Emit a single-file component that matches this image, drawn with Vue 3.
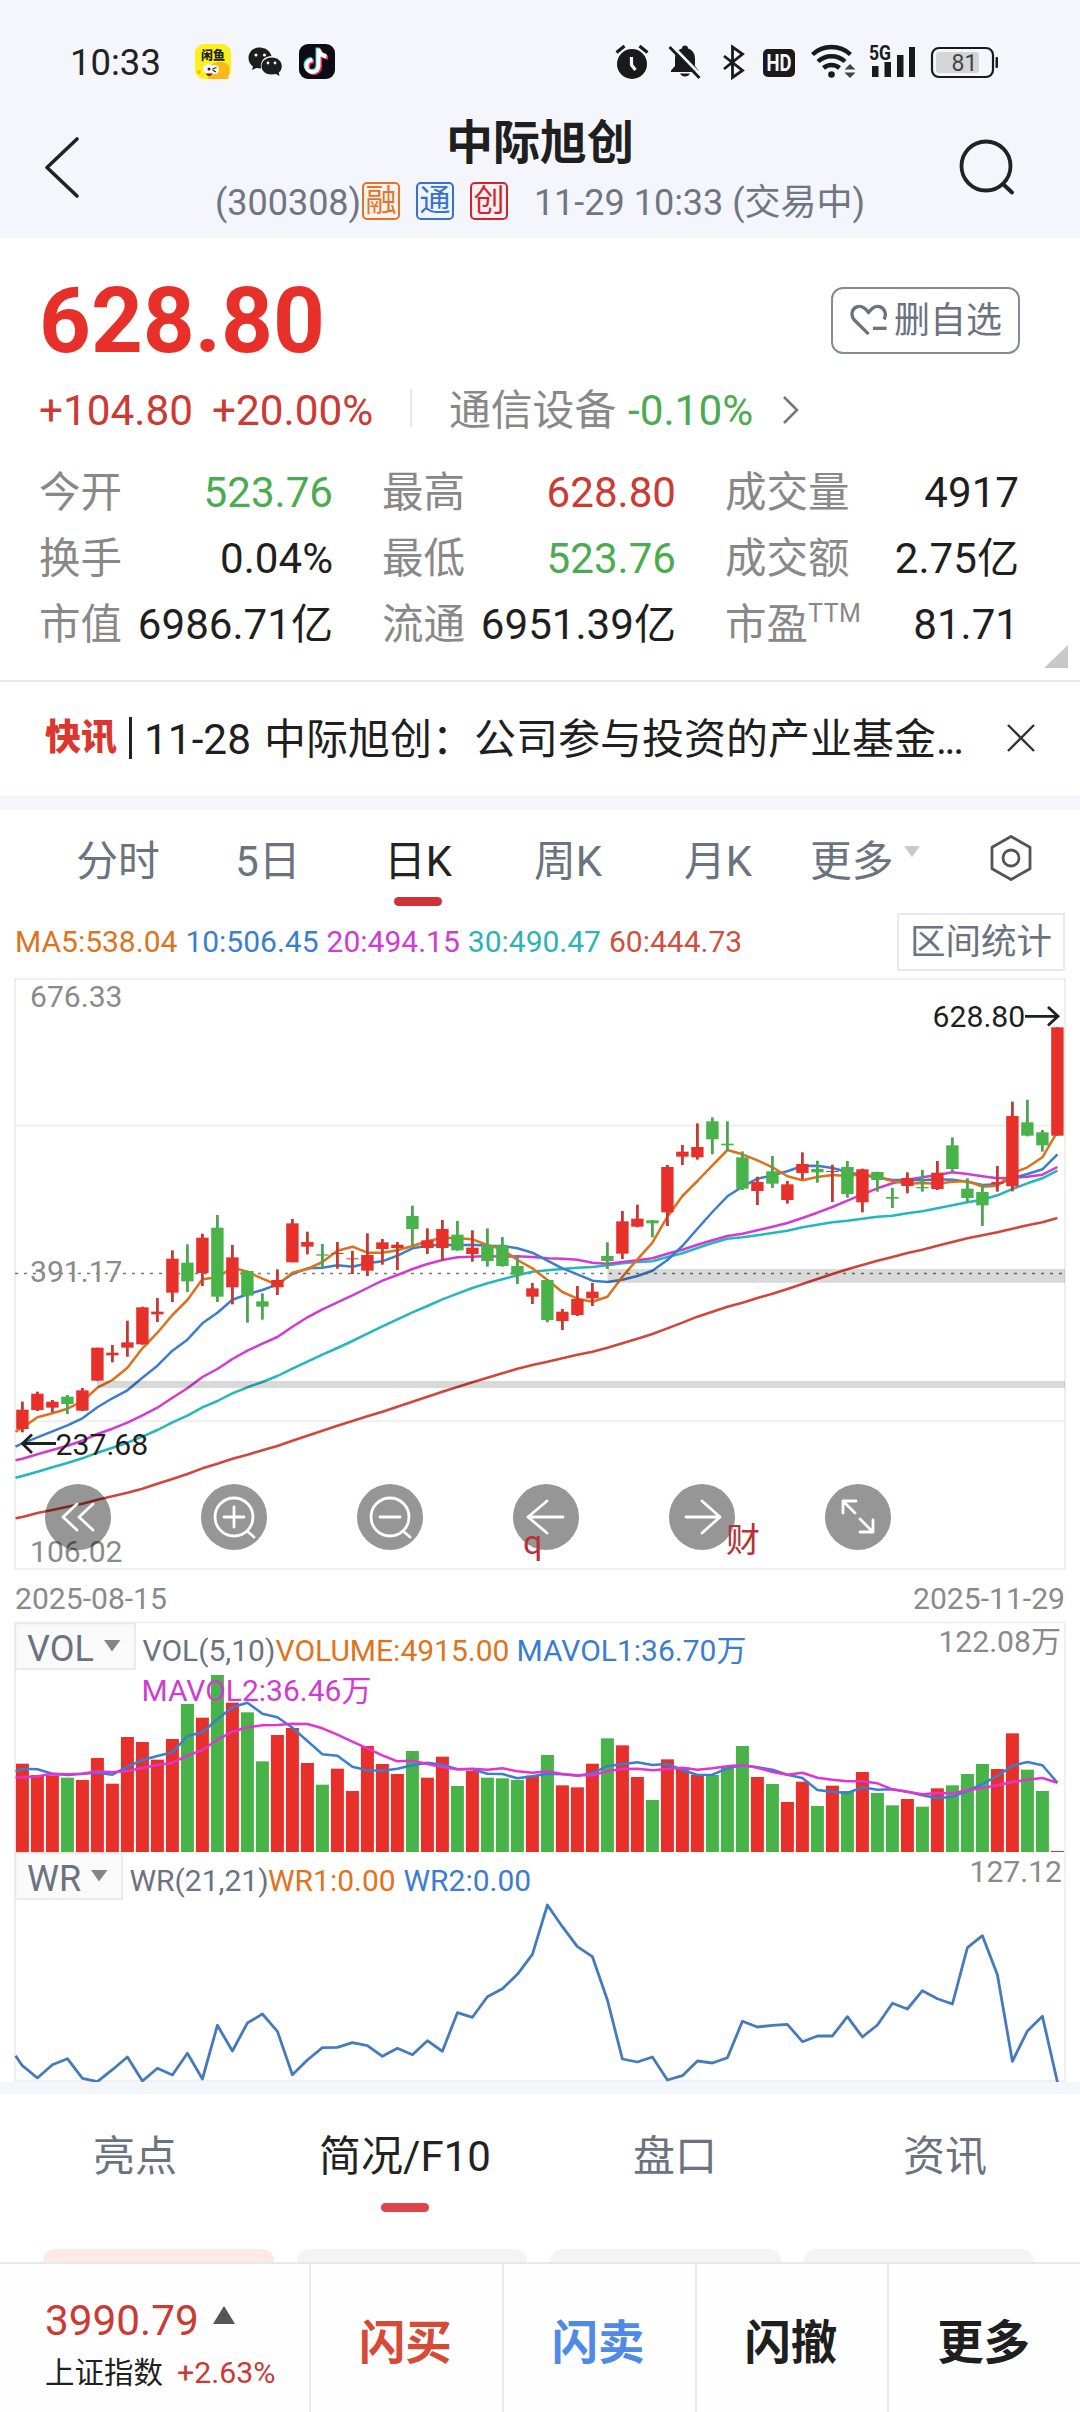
<script setup>
const ORIGIN = 22.4
const STEP = 15
const cx = (i) => ORIGIN + STEP * i

// Rows are [kind, high, bodyTop, bodyBottom, low] in thirds of a pixel
const early = [
  ['r', 605, 629, 687, 697], ['r', 575, 581, 630, 633], ['r', 600, 605, 623, 637], ['g', 585, 590, 612, 642],
  ['r', 564, 571, 632, 633], ['r', 443, 443, 542, 542], ['r', 435, 458, 466, 487], ['r', 362, 427, 443, 470],
  ['r', 320, 322, 433, 434], ['r', 294, 335, 343, 366], ['r', 151, 176, 278, 306], ['g', 133, 188, 244, 276],
  ['r', 101, 113, 219, 258], ['g', 45, 83, 290, 306], ['r', 135, 172, 262, 313], ['g', 212, 213, 287, 368],
  ['g', 280, 304, 320, 359], ['r', 208, 240, 262, 285], ['r', 57, 70, 187, 187], ['r', 95, 126, 140, 163],
  ['g', 132, 163, 167, 205], ['r', 126, 159, 162, 206], ['r', 153, 175, 178, 222], ['r', 100, 165, 212, 228],
  ['r', 117, 127, 147, 194], ['r', 126, 134, 144, 210], ['g', 17, 48, 87, 136], ['r', 85, 121, 144, 162],
  ['r', 60, 87, 144, 181], ['g', 63, 104, 151, 152], ['r', 91, 143, 162, 185], ['g', 85, 136, 183, 200],
  ['g', 111, 136, 198, 200], ['g', 170, 198, 224, 252], ['r', 249, 265, 290, 312], ['g', 238, 240, 360, 367],
  ['r', 327, 335, 363, 390], ['r', 258, 297, 345, 348], ['r', 249, 275, 295, 318], ['g', 127, 168, 183, 207],
  ['r', 33, 64, 161, 177], ['r', 14, 56, 80, 82], ['g', 60, 61, 70, 112],
].map(([k, ...v]) => [k, ...v.map((n) => n + 720)])
const late = [
  ['r', 615, 621, 757, 798], ['r', 555, 575, 590, 615], ['r', 490, 561, 592, 599], ['g', 472, 484, 538, 583],
  ['g', 484, 551, 556, 573], ['g', 574, 592, 686, 690], ['r', 650, 666, 693, 735], ['g', 588, 634, 671, 684],
  ['r', 663, 673, 720, 731], ['r', 577, 612, 639, 658], ['g', 602, 627, 637, 668], ['r', 614, 633, 636, 726],
  ['g', 603, 621, 702, 713], ['r', 626, 628, 727, 757], ['g', 635, 636, 660, 695], ['g', 684, 711, 716, 744],
  ['r', 637, 654, 678, 700], ['g', 630, 681, 685, 695], ['r', 603, 638, 687, 690], ['g', 532, 556, 627, 635],
  ['g', 655, 686, 714, 727], ['g', 672, 696, 736, 798], ['r', 618, 666, 672, 695], ['r', 425, 468, 679, 694],
  ['g', 419, 487, 527, 529], ['g', 510, 517, 556, 575], ['r', 202, 202, 527, 527],
]
const py = (v) => 960 + v / 3
const candles = [...early, ...late].map(([kind, hi, top, bottom, lo], i) => ({
  kind, x: cx(i), hi: py(hi), top: py(top), lo: py(lo), h: (bottom - top) / 3,
}))

// First value of every series sits on the left border, the rest on candle centres
const toLine = (vals, y) => vals.map((v, i) => `${i === 0 ? 15.5 : cx(i - 1)},${y(v).toFixed(1)}`).join(' ')
const merge = (a, b) => [...a.map((n) => n + 720), ...b]

const maLines = [
  { color: '#d2453a', vals: merge(
    [955, 951, 939, 930, 920, 911, 899, 889, 878, 866, 851, 837, 822, 805, 791, 776, 764, 751, 738, 722, 707, 692, 677, 663, 649, 635, 620, 605, 590, 575, 561, 547, 533, 520, 506, 495, 485, 475, 464, 455, 443, 430, 416, 402],
    [1105, 1088, 1070, 1055, 1040, 1028, 1014, 1001, 987, 972, 957, 942, 928, 915, 902, 891, 879, 869, 857, 846, 835, 826, 817, 806, 796, 787, 774]) },
  { color: '#22b8bd', vals: merge(
    [833, 828, 815, 802, 789, 775, 758, 743, 728, 710, 690, 667, 647, 622, 603, 580, 562, 546, 528, 506, 485, 464, 444, 423, 401, 379, 358, 337, 318, 298, 281, 264, 250, 238, 226, 215, 211, 207, 203, 201, 196, 190, 186, 184],
    [891, 880, 864, 849, 836, 832, 826, 819, 812, 802, 794, 787, 782, 776, 770, 767, 760, 754, 745, 736, 727, 719, 706, 687, 670, 655, 632]) },
  { color: '#d23bd2', vals: merge(
    [781, 776, 763, 750, 737, 722, 702, 686, 668, 646, 623, 593, 565, 531, 507, 477, 452, 431, 411, 380, 352, 328, 307, 286, 264, 242, 225, 207, 192, 180, 172, 170, 168, 170, 169, 171, 175, 176, 179, 188, 191, 186, 181, 175],
    [881, 869, 854, 841, 828, 821, 811, 800, 789, 774, 758, 741, 722, 703, 685, 670, 659, 652, 645, 637, 642, 649, 655, 653, 650, 644, 621]) },
  { color: '#3b7dd0', vals: merge(
    [740, 730, 712, 694, 676, 655, 622, 595, 571, 533, 497, 452, 419, 370, 338, 299, 283, 270, 253, 222, 205, 203, 196, 200, 190, 184, 167, 145, 137, 134, 136, 134, 137, 138, 145, 158, 182, 205, 223, 242, 246, 239, 228, 212],
    [900, 858, 806, 756, 709, 680, 656, 646, 634, 618, 617, 624, 636, 646, 652, 660, 660, 661, 658, 659, 665, 675, 673, 655, 642, 628, 583]) },
  { color: '#df7119', vals: merge(
    [695, 683, 652, 640, 626, 604, 563, 540, 503, 445, 398, 345, 300, 238, 232, 203, 215, 236, 255, 218, 207, 186, 152, 140, 158, 158, 151, 138, 124, 113, 115, 118, 135, 148, 180, 205, 240, 276, 296, 305, 290, 230, 178, 128],
    [770, 708, 663, 616, 570, 583, 601, 622, 649, 661, 651, 645, 648, 643, 651, 663, 671, 669, 671, 665, 663, 680, 677, 640, 622, 592, 515]) },
].map((l) => ({ ...l, points: toLine(l.vals, py) }))

const sy = (v) => 1600 + v / 3
const volumes = [
  491, 525, 526, 533, 540, 474, 551, 411, 426, 479, 417, 312, 353, 225, 308, 337, 484, 405, 384, 489, 554, 506, 573, 438, 492,
  522, 453, 533, 470, 558, 513, 533, 535, 540, 527, 465, 556, 562, 491, 415, 436, 531, 600, 478, 502, 525, 525, 503, 438, 531,
  552, 606, 545, 618, 557, 573, 516, 579, 616, 597, 620, 565, 556, 522, 492, 507, 400, 509, 573, 753,
].map((v, i) => ({ x: cx(i) - 6.5, y: sy(v), h: (756 - v) / 3, kind: candles[i].kind }))

const volLines = [
  { color: '#3b7dd0', points: toLine([514, 506, 508, 521, 525, 521, 518, 524, 500, 480, 468, 457, 408, 397, 358, 322, 308, 341, 352, 383, 423, 463, 467, 500, 511, 512, 506, 496, 488, 494, 508, 508, 521, 522, 535, 529, 521, 523, 527, 520, 498, 493, 487, 495, 492, 510, 525, 524, 505, 495, 502, 509, 524, 534, 570, 575, 579, 562, 569, 568, 575, 586, 595, 590, 573, 552, 528, 497, 486, 496, 548], sy) },
  { color: '#e235cf', points: toLine([533, 532, 529, 521, 523, 521, 514, 517, 513, 504, 495, 488, 467, 450, 419, 395, 382, 376, 375, 371, 372, 385, 404, 425, 445, 466, 484, 482, 492, 501, 508, 506, 509, 505, 514, 518, 514, 522, 526, 526, 514, 507, 506, 511, 507, 503, 509, 505, 499, 495, 503, 516, 524, 518, 533, 539, 544, 544, 550, 568, 575, 583, 579, 580, 571, 564, 556, 546, 539, 534, 548], sy) },
]
const wrLine = toLine([1367, 1397, 1434, 1394, 1376, 1435, 1445, 1409, 1371, 1443, 1405, 1425, 1360, 1437, 1276, 1353, 1269, 1242, 1294, 1424, 1380, 1343, 1342, 1328, 1337, 1369, 1345, 1364, 1322, 1354, 1238, 1252, 1190, 1166, 1123, 1063, 915, 980, 1040, 1070, 1200, 1377, 1386, 1371, 1440, 1427, 1383, 1389, 1373, 1264, 1281, 1276, 1273, 1325, 1308, 1308, 1250, 1311, 1275, 1210, 1227, 1172, 1196, 1212, 1043, 1007, 1124, 1384, 1293, 1249, 1446], sy)

const stats = [
  { label: '今开', value: '523.76', tone: 'down' }, { label: '最高', value: '628.80', tone: 'up' }, { label: '成交量', value: '4917' },
  { label: '换手', value: '0.04%' }, { label: '最低', value: '523.76', tone: 'down' }, { label: '成交额', value: '2.75亿' },
  { label: '市值', value: '6986.71亿' }, { label: '流通', value: '6951.39亿' }, { label: '市盈', sup: 'TTM', value: '81.71' },
]
const periods = ['分时', '5日', '日K', '周K', '月K']
const averages = [
  { text: 'MA5:538.04', color: '#e0731c' }, { text: '10:506.45', color: '#3b7dd0' }, { text: '20:494.15', color: '#d23bd2' },
  { text: '30:490.47', color: '#2bb3b5' }, { text: '60:444.73', color: '#d0503f' },
]
const controls = [
  'M-1 -13 L-15 0 L-1 13 M15 -13 L1 0 L15 13',
  'M19 0 A19 19 0 1 1 -19 0 A19 19 0 1 1 19 0 M13 14 L20 20 M-10 0 H10 M0 -10 V10',
  'M19 0 A19 19 0 1 1 -19 0 A19 19 0 1 1 19 0 M13 14 L20 20 M-10 0 H10',
  'M17 0 H-17 M1 -16 L-18 0 L1 16',
  'M-16 0 H18 M0 -16 L18 0 L0 16',
  'M-15 -4 V-16 H-2 M-15 -16 L-3 -4 M2 2 L15 15 M15 3 V15 H2',
].map((d, i) => ({ d, x: 78 + 156 * i }))
const sections = ['亮点', '简况/F10', '盘口', '资讯']
const actions = [
  { text: '闪买', color: '#d64a38' }, { text: '闪卖', color: '#4f8ae6' }, { text: '闪撤', color: '#1f1f1f' }, { text: '更多', color: '#1f1f1f' },
]
</script>

<template>
  <div class="app">
    <header class="top">
      <div class="status">
        <span class="clock">10:33</span>
        <svg class="apps" width="142" height="38" viewBox="194 44 142 38">
          <rect x="195" y="45" width="36" height="35" rx="9" fill="#fbf01c" />
          <path d="M209 80 C203 70 212 62 222 63 C231 64 230 72 228 80Z" fill="#fbb917" />
          <ellipse cx="208.500" cy="70" rx="5.500" ry="5" fill="#fff" /><ellipse cx="214.500" cy="70.500" rx="4.500" ry="4.500" fill="#fff" />
          <circle cx="209" cy="70" r="1.500" fill="#222" /><path d="M212.500 70 l4-1.500 M212.500 71 l3.500 2" stroke="#222" stroke-width="1.200" />
          <path d="M205.500 74.500 h7 q-3 5-7 0z" fill="#7d1110" />
          <circle cx="199" cy="73" r="2" fill="#fbb917" />
          <text x="201" y="60.500" class="mini">闲鱼</text>
          <path d="M260 48.500 C252 48.500 248.500 54 248.500 59 C248.500 63 250.500 65.500 253 67.500 L252 71 L256.500 69 L261 69.500 C260 62 264 57.500 271.500 57 C270 52 265.500 48.500 260 48.500Z" fill="#1d1d1d" />
          <path d="M272 58.500 C265 58.500 261.500 63 261.500 67 C261.500 72.500 266 75.500 271.500 75.500 L276 75 L279.500 77 L278.800 73.500 C280.800 72 281.800 69.500 281.800 67 C281.500 62 277.500 58.500 272 58.500Z" fill="#1d1d1d" />
          <g fill="#f4f6fb"><circle cx="256" cy="56" r="1.600" /><circle cx="264.500" cy="56" r="1.600" /><circle cx="268" cy="64" r="1.400" /><circle cx="275" cy="64" r="1.400" /></g>
          <rect x="299" y="45" width="36" height="35" rx="9" fill="#0d0c16" />
          <g fill="none" stroke-width="4">
            <path d="M318.500 49.500 V67 a6 6 0 1 1-6-6 M318.500 50.500 q1.500 6 8 7" stroke="#2ce0dc" transform="translate(-1 -1)" />
            <path d="M318.500 49.500 V67 a6 6 0 1 1-6-6 M318.500 50.500 q1.500 6 8 7" stroke="#f03250" transform="translate(1.500 1.200)" />
            <path d="M318.500 49.500 V67 a6 6 0 1 1-6-6 M318.500 50.500 q1.500 6 8 7" stroke="#fff" />
          </g>
        </svg>
        <svg class="signals" width="390" height="40" viewBox="612 42 390 40">
          <g fill="#1a1a1a">
            <circle cx="632" cy="64" r="15" />
            <path d="M616.500 52.500 l8-6.500 M647.500 52.500 l-8-6.500" stroke="#1a1a1a" stroke-width="3.200" />
            <path d="M631.500 57 v8 l4 5" fill="none" stroke="#f4f6fb" stroke-width="3.200" />
            <path d="M671 70.500 l4-4.500 v-7 c0-6 3-9.500 7-10.500 a3 3 0 0 1 6 0 c4 1 7 4.500 7 10.500 v7 l3.500 4.500 v1.500 h-27.500z M680 73.500 h10 q-1.500 3-5 3 t-5-3z" />
            <path d="M671.500 45 l31 32" stroke="#f4f6fb" stroke-width="3" /><path d="M669.500 47 l30 31" stroke="#1a1a1a" stroke-width="2.800" />
            <path d="M724 56 l18.500 14.500 -10 7 V47 l10 7 L724 69" fill="none" stroke="#1a1a1a" stroke-width="2.800" />
            <rect x="763" y="49" width="32" height="28" rx="5" />
            <circle cx="831.500" cy="74.500" r="3.300" />
            <g fill="none" stroke="#1a1a1a" stroke-width="4.400"><path d="M812.500 54.500 a28 28 0 0 1 38 0" /><path d="M818 61.500 a20 20 0 0 1 27 0" /><path d="M823.500 68 a12 12 0 0 1 16 0" /></g>
            <path d="M850 64 l5.500 5.500 h-11z M850 78 l5.500-5.500 h-11z" fill="#444" />
            <rect x="872" y="66" width="6.500" height="11" /><rect x="884.500" y="62" width="6.500" height="15" /><rect x="897" y="55" width="6.500" height="22" /><rect x="909" y="47" width="6" height="30" />
            <text x="869" y="60" class="fiveg" textLength="22" lengthAdjust="spacingAndGlyphs">5G</text>
            <rect x="932" y="48" width="61" height="29" rx="7" fill="none" stroke="#1a1a1a" stroke-width="2.200" />
            <rect x="936" y="52" width="43" height="21" rx="3" fill="#d4d5d9" /><rect x="995.500" y="57" width="2.500" height="11" rx="1" />
          </g>
          <text x="766.500" y="71" class="hd" textLength="25" lengthAdjust="spacingAndGlyphs">HD</text>
          <text x="964.500" y="71" class="level" text-anchor="middle">81</text>
        </svg>
      </div>
      <div class="title-bar">
        <svg width="56" height="68" viewBox="0 0 56 68" class="back"><path d="M37 5 L7 33.500 L37 62" fill="none" stroke="#222" stroke-width="3.600" stroke-linejoin="round" stroke-linecap="round" /></svg>
        <div class="titles">
          <h1>中际旭创</h1>
          <div class="sub">
            <span class="code">(300308)</span>
            <i class="tag orange">融</i><i class="tag blue">通</i><i class="tag red">创</i>
            <span class="when">11-29 10:33 (交易中)</span>
          </div>
        </div>
        <svg width="60" height="60" viewBox="0 0 60 60" class="search"><circle cx="29" cy="28" r="24.500" fill="none" stroke="#222" stroke-width="3.800" /><path d="M46 46 L55 54.500" stroke="#222" stroke-width="4" stroke-linecap="round" /></svg>
      </div>
    </header>

    <section class="quote">
      <div class="price-row">
        <strong>628.80</strong>
        <div class="fav">
          <svg width="42" height="36" viewBox="0 0 42 36"><path d="M20 31.500 L5.500 17 C1.500 12.500 2.500 5.500 8 3.500 C13 1.800 17 5 20 9.500 C23 5 27 1.800 32 3.500 C37 5.500 38.500 11.500 36 16.500" fill="none" stroke="#6b7280" stroke-width="3.400" stroke-linejoin="round" /><path d="M24.500 25.500 H38.500" stroke="#6b7280" stroke-width="3.400" /></svg>
          <span>删自选</span>
        </div>
      </div>
      <div class="change">
        <span class="up">+104.80</span><span class="up pct">+20.00%</span><i class="bar"></i>
        <span class="sector">通信设备</span><span class="down secpct">-0.10%</span>
        <svg width="18" height="30" viewBox="0 0 18 30"><path d="M2 2 L15 15 L2 28" fill="none" stroke="#777" stroke-width="2.600" /></svg>
      </div>
      <div class="stats">
        <div v-for="s in stats" :key="s.label" class="stat">
          <span class="label">{{ s.label }}<sup v-if="s.sup">{{ s.sup }}</sup></span>
          <span :class="s.tone">{{ s.value }}</span>
        </div>
      </div>
      <i class="corner"></i>
    </section>

    <section class="news">
      <b>快讯</b><i></i><span class="headline"><span class="date">11-28</span>中际旭创：公司参与投资的产业基金<span class="dots">...</span></span>
      <svg width="30" height="30" viewBox="0 0 30 30"><path d="M2 2 L28 28 M28 2 L2 28" stroke="#333" stroke-width="2.400" /></svg>
    </section>

    <nav class="periods">
      <div v-for="p in periods" :key="p" class="period" :class="{ active: p === '日K' }"><span>{{ p }}</span><i></i></div>
      <div class="period more"><span>更多</span><em></em></div>
      <svg width="44" height="48" viewBox="0 0 44 48"><path d="M22 2.500 L41 13.200 V34.800 L22 45.500 L3 34.800 V13.200 Z" fill="none" stroke="#555" stroke-width="2.800" stroke-linejoin="round" /><circle cx="22" cy="24" r="8" fill="none" stroke="#555" stroke-width="2.800" /></svg>
    </nav>
    <div class="averages">
      <span v-for="a in averages" :key="a.text" :style="{ color: a.color }">{{ a.text }}</span>
      <button>区间统计</button>
    </div>

    <svg class="chart" width="1080" height="1104" viewBox="0 978 1080 1104">
      <g fill="none" stroke="#ececee" stroke-width="1.600">
        <path d="M15 978.800 H1065 V1569 H15Z M15 1125.500 H1065 M15 1421.300 H1065" />
        <path d="M15 2081 V1622.500 H1065 V2081Z" />
      </g>
      <path d="M15 1273.500 H1065" stroke="#777" stroke-width="1.500" stroke-dasharray="3 6" />
      <g class="axis">
        <text x="30" y="1007">676.33</text>
        <text x="30" y="1282">391.17</text>
        <text x="30" y="1562">106.02</text>
        <text x="15" y="1609">2025-08-15</text>
        <text x="1065" y="1609" text-anchor="end">2025-11-29</text>
        <text x="1061" y="1652" text-anchor="end">122.08万</text>
        <text x="1062" y="1882" text-anchor="end">127.12</text>
      </g>
      <polyline v-for="l in maLines" :key="l.color" :points="l.points" :stroke="l.color" class="line" />
      <g v-for="c in candles" :key="c.x" :class="c.kind">
        <rect :x="c.x - 1.400" :y="c.hi" width="2.800" :height="c.lo - c.hi" class="wick" />
        <rect :x="c.x - 6.200" :y="c.top" width="12.400" :height="c.h" />
      </g>
      <path d="M607.500 1269 H1065 V1282.700 H607.500Z M97 1381 H1065 V1388 H97Z" fill="#000" opacity=".15" />
      <g class="mark">
        <text x="932.500" y="1027">628.80</text><text x="55.500" y="1455">237.68</text>
        <path d="M1025 1016.300 H1057 M1048 1007 L1058 1016.300 L1048 1025.500 M56 1443.500 H23 M32 1434.500 L22.500 1443.500 L32 1453" />
      </g>
      <g v-for="b in controls" :key="b.x" :transform="`translate(${b.x} 1517)`">
        <circle r="33" fill="#000" opacity=".41" /><path :d="b.d" class="glyph" />
      </g>
      <text x="523" y="1554" class="red-note">q</text><text x="726" y="1552" class="red-note">财</text>

      <rect v-for="v in volumes" :key="v.x" :x="v.x" :y="v.y" width="13" :height="v.h" :class="v.kind" />
      <polyline v-for="l in volLines" :key="l.color" :points="l.points" :stroke="l.color" class="line" />
      <g fill="#fafafb" stroke="#e6e7ea" stroke-width="1.600"><rect x="15.500" y="1623.500" width="119.500" height="45.500" /><rect x="15.500" y="1853" width="106.500" height="46" /></g>
      <g class="picker"><text x="27" y="1661">VOL</text><text x="27" y="1891">WR</text></g>
      <path d="M104 1640 H120.500 L112 1651.500Z M91 1870 H107.500 L99 1881.500Z" fill="#858585" />
      <g class="legend">
        <text x="142.500" y="1661" fill="#6b7280">VOL(5,10)</text>
        <text x="275.500" y="1661" fill="#e0731c">VOLUME:4915.00</text>
        <text x="516.500" y="1661" fill="#3b7dd0">MAVOL1:36.70万</text>
        <text x="141.500" y="1700.500" fill="#d23bd2">MAVOL2:36.46万</text>
        <text x="129.500" y="1891" fill="#6b7280">WR(21,21)</text>
        <text x="268" y="1891" fill="#e0731c">WR1:0.00</text>
        <text x="403.500" y="1891" fill="#3b7dd0">WR2:0.00</text>
      </g>
      <polyline :points="wrLine" stroke="#457abd" class="line wr" />
    </svg>

    <nav class="sections">
      <div v-for="s in sections" :key="s" class="section" :class="{ active: s === '简况/F10' }"><span>{{ s }}</span><i></i></div>
    </nav>
    <div class="cards"><i v-for="n in 4" :key="n" :class="{ first: n === 1 }"></i></div>

    <footer class="dock">
      <div class="index">
        <div class="points"><span>3990.79</span><i></i></div>
        <div class="name"><span>上证指数</span><em>+2.63%</em></div>
      </div>
      <div v-for="a in actions" :key="a.text" class="action" :style="{ color: a.color }">{{ a.text }}</div>
    </footer>
  </div>
</template>

<style>
body { margin: 0; background: #fff; }
</style>

<style scoped>
* { box-sizing: border-box; }
.app { width: 1080px; height: 2412px; overflow: hidden; display: flex; flex-direction: column; background: #fff; font-family: Roboto, "Noto Sans CJK SC", sans-serif; color: #1f1f1f; line-height: 1; }
.app > * { flex-shrink: 0; }
i, em { font-style: normal; }
svg { display: block; flex: none; }
.up { color: #cb3a33; }
.down { color: #4cab50; }

.top { height: 238px; background: #f4f6fb; }
.status { height: 106px; padding-top: 18px; display: flex; align-items: center; }
.clock { width: 124px; margin-left: 70px; padding-top: 2px; font-size: 36.5px; color: #222; }
.apps { margin-right: 276px; }
.mini { font-size: 12px; font-weight: 900; fill: #222; }
.fiveg { font-size: 20px; font-weight: 700; }
.hd { font-size: 23px; font-weight: 700; fill: #f4f6fb; }
.level { font-size: 23px; fill: #444; }
.title-bar { height: 132px; display: flex; align-items: flex-start; }
.back { margin: 28px 0 0 40px; }
.titles { width: 888px; display: flex; flex-direction: column; align-items: center; }
h1 { margin: 12px 0 0; font-size: 47px; font-weight: 700; line-height: 50px; }
.sub { margin-top: 14px; height: 42px; display: flex; align-items: center; font-size: 36px; color: #6f7683; white-space: nowrap; }
.code { width: 147px; }
.tag { width: 38px; height: 38px; margin-right: 16px; margin-top: -4px; border: 2px solid; border-radius: 5px; font-size: 31px; line-height: 33px; text-align: center; display: flex; justify-content: center; }
.orange { color: #e0742c; background: #fdf2ee; }
.blue { color: #3a6fd0; background: #eff4fd; }
.red { color: #cf2530; background: #fdf0f2; }
.when { margin-left: 10px; }
.search { margin: 32px 0 0 -27px; }

.quote { position: relative; height: 444px; padding: 0 61px 0 39px; border-bottom: 2px solid #ebebeb; }
.price-row { height: 138px; display: flex; justify-content: space-between; align-items: center; padding-top: 28px; }
.price-row strong { font-size: 90.5px; font-weight: 700; color: #e7302a; }
.fav { width: 189px; height: 67px; margin: -1px -1px 0 0; border: 2px solid #858b95; border-radius: 12px; display: flex; align-items: center; padding-left: 16px; color: #6b7280; font-size: 36px; }
.fav svg { width: 41px; margin-right: 4px; }
.change { height: 70px; display: flex; align-items: center; font-size: 42.3px; }
.change > * { flex: none; }
.pct { width: 198px; margin-left: 17px; }
.change .up:first-child { width: 156px; }
.bar { width: 2px; height: 38px; background: #e5e7eb; margin: -6px 37px 0 0; }
.sector { width: 179px; color: #888; font-size: 41.8px; }
.secpct { width: 154px; }
.change svg { margin-top: -2px; }
.stats { display: grid; grid-template-columns: repeat(3, 294px); column-gap: 49px; margin-top: 14px; grid-auto-rows: 66px; }
.stat { display: flex; justify-content: space-between; align-items: center; font-size: 42.1px; white-space: nowrap; }
.label { color: #888; display: flex; font-size: 41.5px; }
sup { font-size: 25px; line-height: 1; margin-top: -3px; letter-spacing: .5px; }
.corner { position: absolute; right: 12px; bottom: 12px; border-left: 24px solid transparent; border-bottom: 23px solid #c8c8c8; }

.news { height: 128px; border-bottom: 15px solid #f4f6fb; display: flex; align-items: center; font-size: 42px; padding-top: 1px; }
.news b { margin-left: 45px; width: 84px; font-size: 36px; font-weight: 900; color: #dc372f; margin-top: -2px; }
.news i { width: 3px; height: 42px; background: #222; margin-right: 12px; margin-top: -3px; }
.headline { width: 862px; white-space: nowrap; display: flex; padding-top: 2px; }
.date { width: 120px; font-size: 42.4px; }
.dots { letter-spacing: -2.5px; }
.news svg { margin-top: -2px; }

.periods { height: 98px; display: flex; color: #6b7280; font-size: 41.8px; }
.period { width: 150px; height: 98px; display: flex; flex-direction: column; align-items: center; padding-top: 31px; }
.period:first-child { margin-left: 43px; }
.period i { width: 48px; height: 9px; border-radius: 5px; margin-top: 14px; }
.active { color: #222; }
.period.active i { background: #cd3337; }
.period.more { width: 114px; margin-left: 17px; flex-direction: row; align-items: flex-start; }
.more em { margin: 5px 0 0 10px; border: 8.500px solid transparent; border-bottom: 0; border-top: 11px solid #c9c9c9; }
.periods svg { margin: 24px 0 0 65px; }
.averages { height: 70px; display: flex; align-items: center; padding: 0 15px; font-size: 30px; white-space: nowrap; }
.averages span { margin-right: 8px; margin-top: -2px; }
.averages button { margin: -3px 0 0 auto; width: 168px; height: 58px; padding: 3px 0 0; border: 2px solid #e8e9ed; background: #fff; font: inherit; font-size: 35.5px; color: #6b7280; }

.chart text { font-family: Roboto, "Noto Sans CJK SC", sans-serif; }
.axis { font-size: 30.1px; fill: #8a8a8a; }
.line { fill: none; stroke-width: 2.5; stroke-linejoin: round; }
.wr { stroke-width: 2.8; }
.r { fill: #e73029; }
.g { fill: #48b349; }
.r .wick { fill: #c23a34; }
.g .wick { fill: #4da552; }
.mark { font-size: 30.2px; fill: #1f1f1f; }
.mark path { fill: none; stroke: #1f1f1f; stroke-width: 2.8; }
.glyph { fill: none; stroke: #fff; stroke-width: 2.8; stroke-linecap: round; stroke-linejoin: round; }
.red-note { font-size: 34px; fill: #b63337; }
.picker { font-size: 36px; fill: #6b7280; }
.legend { font-size: 30px; }

.sections { height: 167px; border-top: 12px solid #f4f6fb; display: flex; font-size: 42px; color: #6b7280; }
.section { width: 270px; height: 155px; display: flex; flex-direction: column; align-items: center; padding-top: 42px; }
.section i { width: 48px; height: 9px; border-radius: 5px; margin-top: 25px; }
.section.active i { background: #e0434a; }
.cards { height: 13px; padding: 0 46px 0 43px; display: flex; gap: 23px; overflow: hidden; }
.cards i { flex: 1; height: 60px; border-radius: 12px; background: #f4f4f5; }
.cards .first { background: #fdeae8; }
.dock { height: 150px; border-top: 2px solid #e8e8ea; display: flex; background: #fefefe; }
.index { width: 309px; padding: 36px 0 0 45px; white-space: nowrap; }
.points { display: flex; font-size: 42.3px; color: #cb3a33; }
.points i { margin: 6px 0 0 14px; height: 0; border: 11px solid transparent; border-top: 0; border-bottom: 18px solid #555; }
.name { display: flex; align-items: center; margin-top: 16px; font-size: 29.500px; }
.name em { margin-left: 14px; color: #cb3a33; font-size: 30.3px; }
.action { flex: 1; border-left: 2px solid #eaeaec; display: flex; align-items: center; justify-content: center; font-size: 46.500px; font-weight: 700; padding: 11px 2px 0 0; }
</style>
